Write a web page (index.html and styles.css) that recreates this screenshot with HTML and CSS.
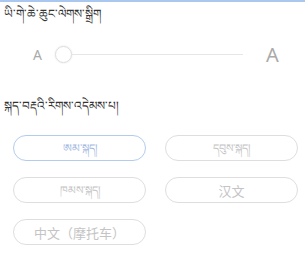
FILE: index.html
```html
<!DOCTYPE html>
<html lang="bo">

<head>
    <meta charset="UTF-8">
    <meta name="viewport" content="width=device-width, initial-scale=1.0">
    <title>Settings</title>
    <link rel="stylesheet" href="styles.css">
</head>

<body>
    <div class="top-bar"></div>
    <div class="section-title">ཡི་གེ་ཆེ་ཆུང་ལེགས་སྒྲིག</div>
    <div class="size-row">
        <span class="a-small">A</span>
        <div class="slider">
            <div class="thumb"></div>
            <div class="track"></div>
        </div>
        <span class="a-big">A</span>
    </div>
    <div class="section-title lang-title">སྐད་བརྡའི་རིགས་འདེམས་པ།</div>
    <div class="lang-grid">
        <button class="lang-btn active">ཨམ་སྐད།</button>
        <button class="lang-btn">དབུས་སྐད།</button>
        <button class="lang-btn">ཁམས་སྐད།</button>
        <button class="lang-btn cjk">汉文</button>
        <button class="lang-btn cjk">中文（摩托车）</button>
    </div>
</body>

</html>
```

FILE: styles.css
```css
body {
    margin: 0;
    background: #fff;
    font-family: 'Noto Sans', 'Noto Sans CJK SC', sans-serif;
    color: #333;
}

.top-bar {
    height: 2px;
    background-color: #a9c7ef;
}

.section-title {
    font-size: 12px;
    line-height: 18px;
    padding: 3px 0 0 4px;
    color: #333;
}

.size-row {
    display: flex;
    align-items: center;
    height: 30px;
    margin-top: 16px;
    padding: 0 0 0 33px;
}

.a-small {
    font-size: 14px;
    color: #aaa;
    width: 22px;
}

.slider {
    display: flex;
    align-items: center;
    width: 188px;
}

.thumb {
    width: 15px;
    height: 15px;
    border: 1px solid #ddd;
    border-radius: 50%;
    box-shadow: 0 0 2px rgba(0, 0, 0, 0.12);
    flex-shrink: 0;
}

.track {
    flex: 1;
    height: 1px;
    background-color: #e6e6e6;
}

.a-big {
    font-size: 20px;
    color: #aaa;
    margin-left: 23px;
}

.lang-title {
    margin-top: 25px;
}

.lang-grid {
    display: grid;
    grid-template-columns: 133px 133px;
    column-gap: 19px;
    row-gap: 16px;
    padding: 20px 0 0 13px;
}

.lang-btn {
    height: 26px;
    border: 1px solid #dedede;
    border-radius: 13px;
    background: #fff;
    color: #c4c4c4;
    font-family: 'Noto Sans', 'Noto Sans CJK SC', sans-serif;
    font-size: 11px;
    padding: 0;
}

.lang-btn.cjk {
    font-size: 13px;
}

.lang-btn.active {
    border-color: #b2ccef;
    color: #9fb8e2;
}
```
